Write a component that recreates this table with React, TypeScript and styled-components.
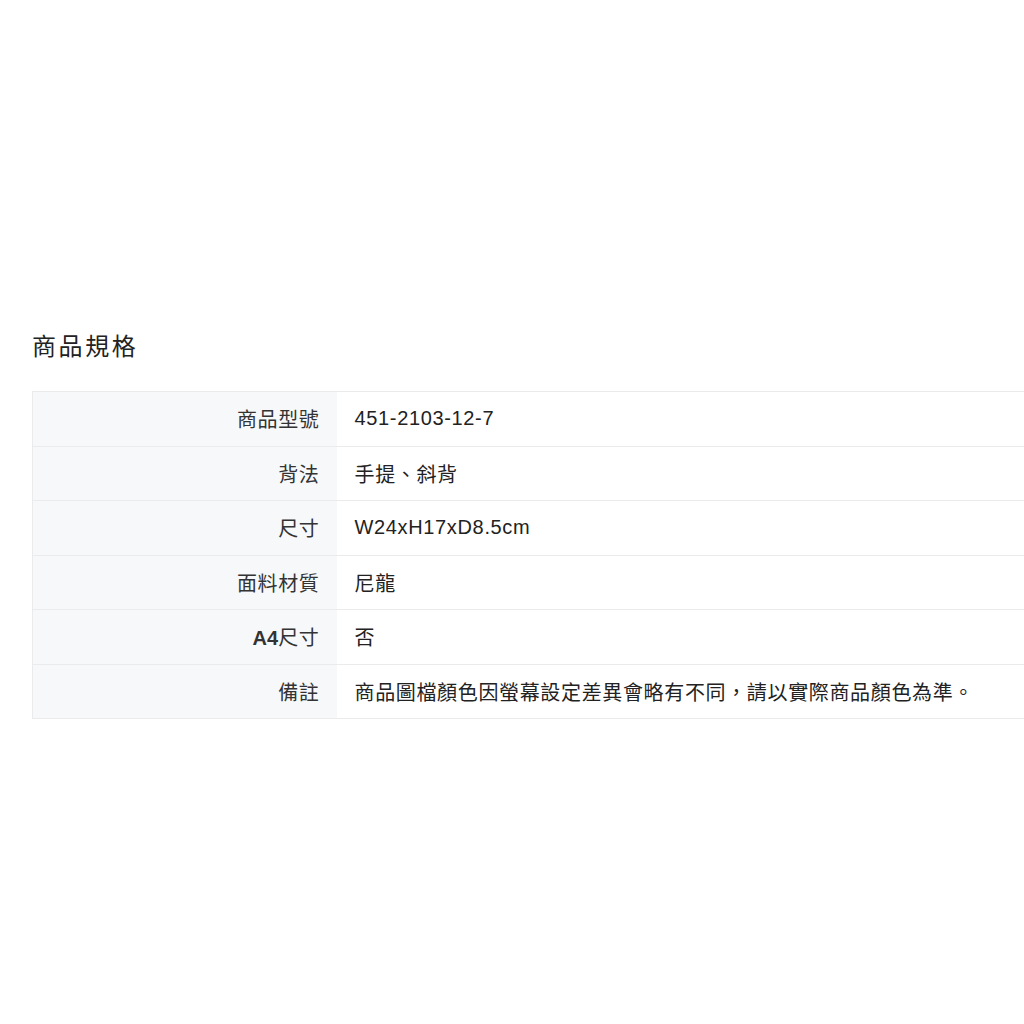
import React from "react";
import styled, { createGlobalStyle } from "styled-components";

const GlobalStyle = createGlobalStyle`
  html, body {
    margin: 0;
    padding: 0;
    background: #ffffff;
  }
  body {
    font-family: "Liberation Sans", "Noto Sans CJK TC", sans-serif;
    color: #333333;
    overflow: hidden;
  }
`;

const Page = styled.div`
  width: 1024px;
  height: 1024px;
  overflow: hidden;
  padding: 330px 0 0 32px;
  box-sizing: border-box;
`;

const Heading = styled.h2`
  margin: 0 0 27px 0;
  font-size: 24px;
  line-height: 34px;
  font-weight: normal;
  letter-spacing: 2.6px;
  color: #222222;
  font-family: "Liberation Sans", "Noto Sans CJK TC", sans-serif;
`;

const SpecTable = styled.table`
  width: 1100px;
  border-collapse: collapse;
  border-left: 1px solid #ebebeb;
  font-size: 20px;
  letter-spacing: 0.65px;
`;

const Row = styled.tr`
  height: 54.5px;
  border-top: 1px solid #ebebeb;
  border-bottom: 1px solid #ebebeb;
`;

const Label = styled.th`
  width: 304px;
  box-sizing: border-box;
  padding: 0 17px 0 0;
  text-align: right;
  font-weight: normal;
  background: #f7f8fa;
  color: #333333;
  vertical-align: middle;
`;

const Value = styled.td`
  padding: 0 0 0 18px;
  text-align: left;
  color: #222222;
  vertical-align: middle;
`;

const Strong = styled.span`
  font-weight: bold;
  letter-spacing: 0;
`;

const specs: { label: React.ReactNode; value: string }[] = [
  { label: "商品型號", value: "451-2103-12-7" },
  { label: "背法", value: "手提、斜背" },
  { label: "尺寸", value: "W24xH17xD8.5cm" },
  { label: "面料材質", value: "尼龍" },
  {
    label: (
      <>
        <Strong>A4</Strong>尺寸
      </>
    ),
    value: "否",
  },
  {
    label: "備註",
    value: "商品圖檔顏色因螢幕設定差異會略有不同，請以實際商品顏色為準。",
  },
];

const App = () => (
  <Page>
    <GlobalStyle />
    <Heading>商品規格</Heading>
    <SpecTable>
      <tbody>
        {specs.map((s, i) => (
          <Row key={i}>
            <Label>{s.label}</Label>
            <Value>{s.value}</Value>
          </Row>
        ))}
      </tbody>
    </SpecTable>
  </Page>
);

export default App;
